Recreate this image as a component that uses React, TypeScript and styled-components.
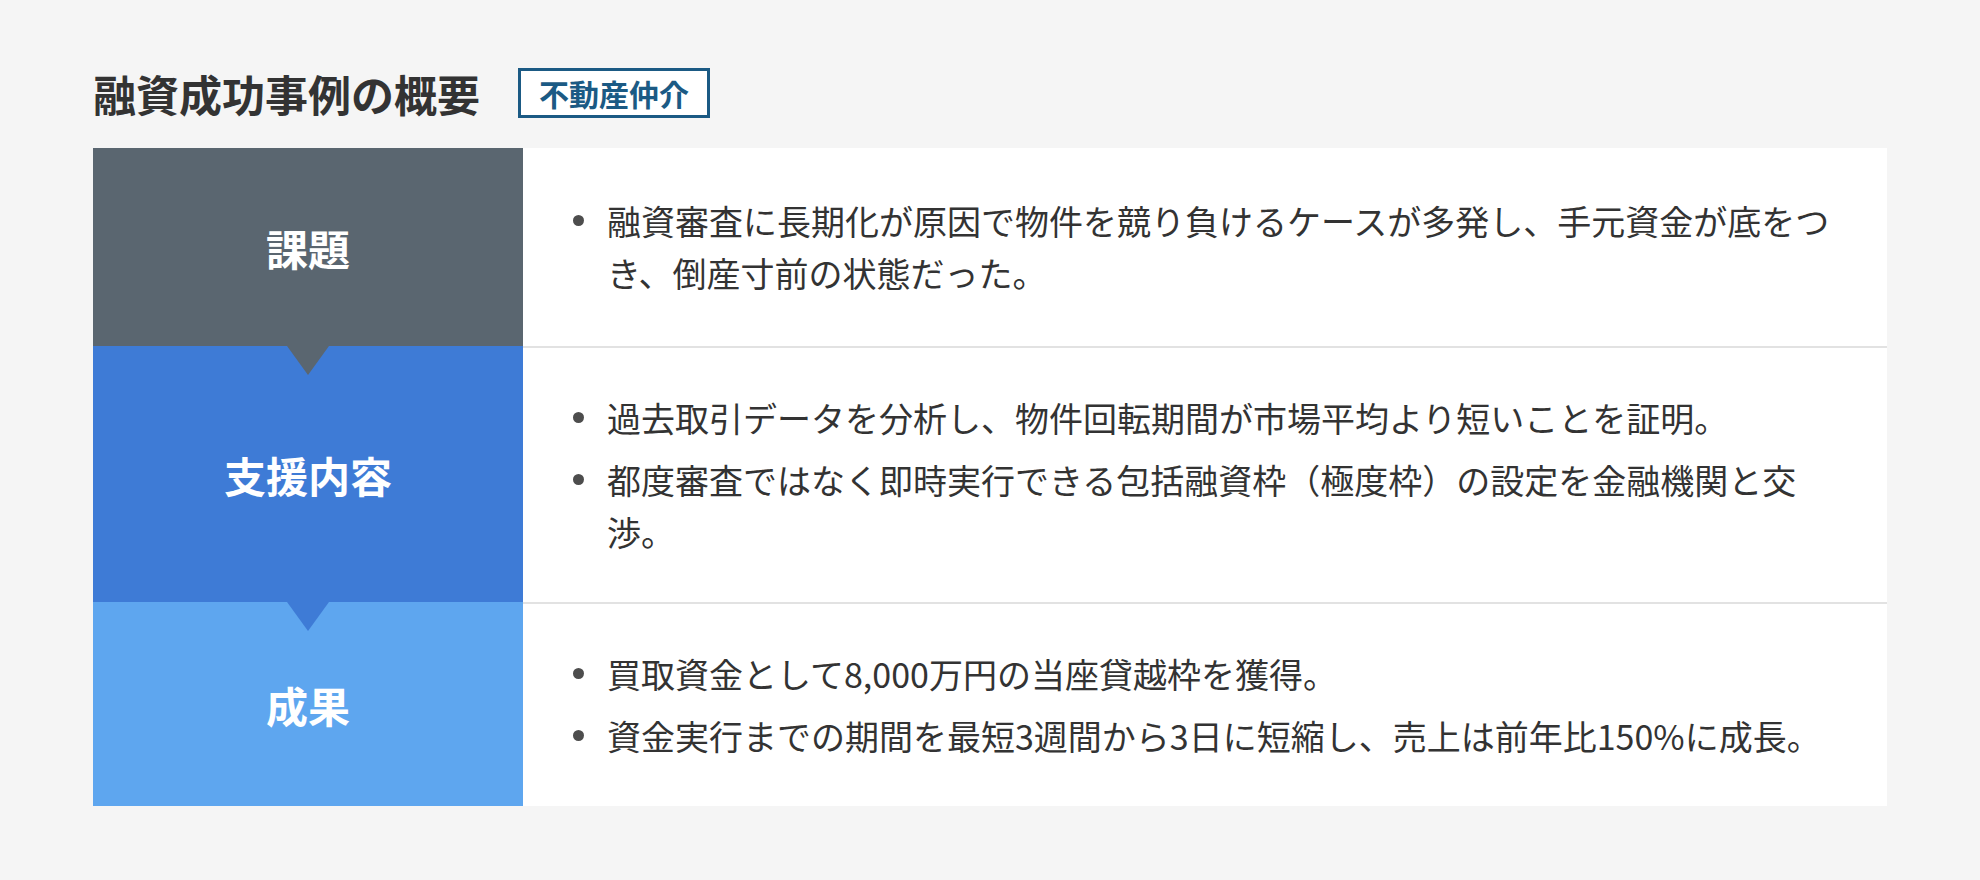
import styled, { createGlobalStyle } from "styled-components"

const GlobalStyle = createGlobalStyle`
  html, body {
    margin: 0;
    padding: 0;
    background: #f5f5f5;
  }
  body {
    font-family: "Noto Sans CJK JP", "Noto Sans", sans-serif;
    color: #333;
  }
`

const Page = styled.div`
  width: 1980px;
  min-height: 880px;
  box-sizing: border-box;
  padding: 68px 93px 0;
`

const Header = styled.div`
  display: flex;
  align-items: center;
  gap: 38px;
  height: 50px;
  margin-bottom: 30px;
`

const Title = styled.h2`
  margin: 0;
  font-size: 43px;
  font-weight: 700;
  line-height: 1;
  color: #333;
`

const Badge = styled.span`
  display: inline-flex;
  align-items: center;
  box-sizing: border-box;
  height: 50px;
  padding: 0 18px;
  border: 3px solid #1b5a84;
  background: #fff;
  color: #1b5a84;
  font-size: 30px;
  font-weight: 700;
  line-height: 1;
`

const Table = styled.div`
  display: flex;
  flex-direction: column;
`

const Row = styled.div`
  display: grid;
  grid-template-columns: 430px 1fr;
  min-height: 198px;
`

const Label = styled.div<{ $bg: string; $arrow?: string }>`
  position: relative;
  display: flex;
  align-items: center;
  justify-content: center;
  background: ${p => p.$bg};
  color: #fff;
  font-size: 42px;
  font-weight: 700;

  ${p =>
    p.$arrow &&
    `
    &::before {
      content: "";
      position: absolute;
      top: 0;
      left: 50%;
      transform: translateX(-50%);
      border-left: 21px solid transparent;
      border-right: 21px solid transparent;
      border-top: 29px solid ${p.$arrow};
    }
  `}
`

const Body = styled.div<{ $divider?: boolean }>`
  display: flex;
  align-items: center;
  background: #fff;
  padding: 44px 40px 44px 50px;
  border-top: ${p => (p.$divider ? "2px solid #e2e2e2" : "none")};
`

const List = styled.ul`
  list-style: none;
  margin: 0;
  padding: 0;
  display: flex;
  flex-direction: column;
  gap: 10px;
`

const Item = styled.li`
  position: relative;
  padding-left: 34px;
  font-size: 34px;
  line-height: 52px;
  color: #333;

  &::before {
    content: "";
    position: absolute;
    left: 0;
    top: 20px;
    width: 11px;
    height: 11px;
    border-radius: 50%;
    background: #4d4d4d;
  }
`

const rows = [
  {
    label: "課題",
    bg: "#5a6670",
    items: ["融資審査に長期化が原因で物件を競り負けるケースが多発し、手元資金が底をつき、倒産寸前の状態だった。"],
  },
  {
    label: "支援内容",
    bg: "#3e7bd6",
    items: [
      "過去取引データを分析し、物件回転期間が市場平均より短いことを証明。",
      "都度審査ではなく即時実行できる包括融資枠（極度枠）の設定を金融機関と交渉。",
    ],
  },
  {
    label: "成果",
    bg: "#5ea6ef",
    items: [
      "買取資金として8,000万円の当座貸越枠を獲得。",
      "資金実行までの期間を最短3週間から3日に短縮し、売上は前年比150%に成長。",
    ],
  },
]

export default function App() {
  return (
    <>
      <GlobalStyle />
      <Page>
        <Header>
          <Title>融資成功事例の概要</Title>
          <Badge>不動産仲介</Badge>
        </Header>
        <Table>
          {rows.map((r, i) => (
            <Row key={r.label}>
              <Label $bg={r.bg} $arrow={i > 0 ? rows[i - 1].bg : undefined}>
                {r.label}
              </Label>
              <Body $divider={i > 0}>
                <List>
                  {r.items.map(t => (
                    <Item key={t}>{t}</Item>
                  ))}
                </List>
              </Body>
            </Row>
          ))}
        </Table>
      </Page>
    </>
  )
}
